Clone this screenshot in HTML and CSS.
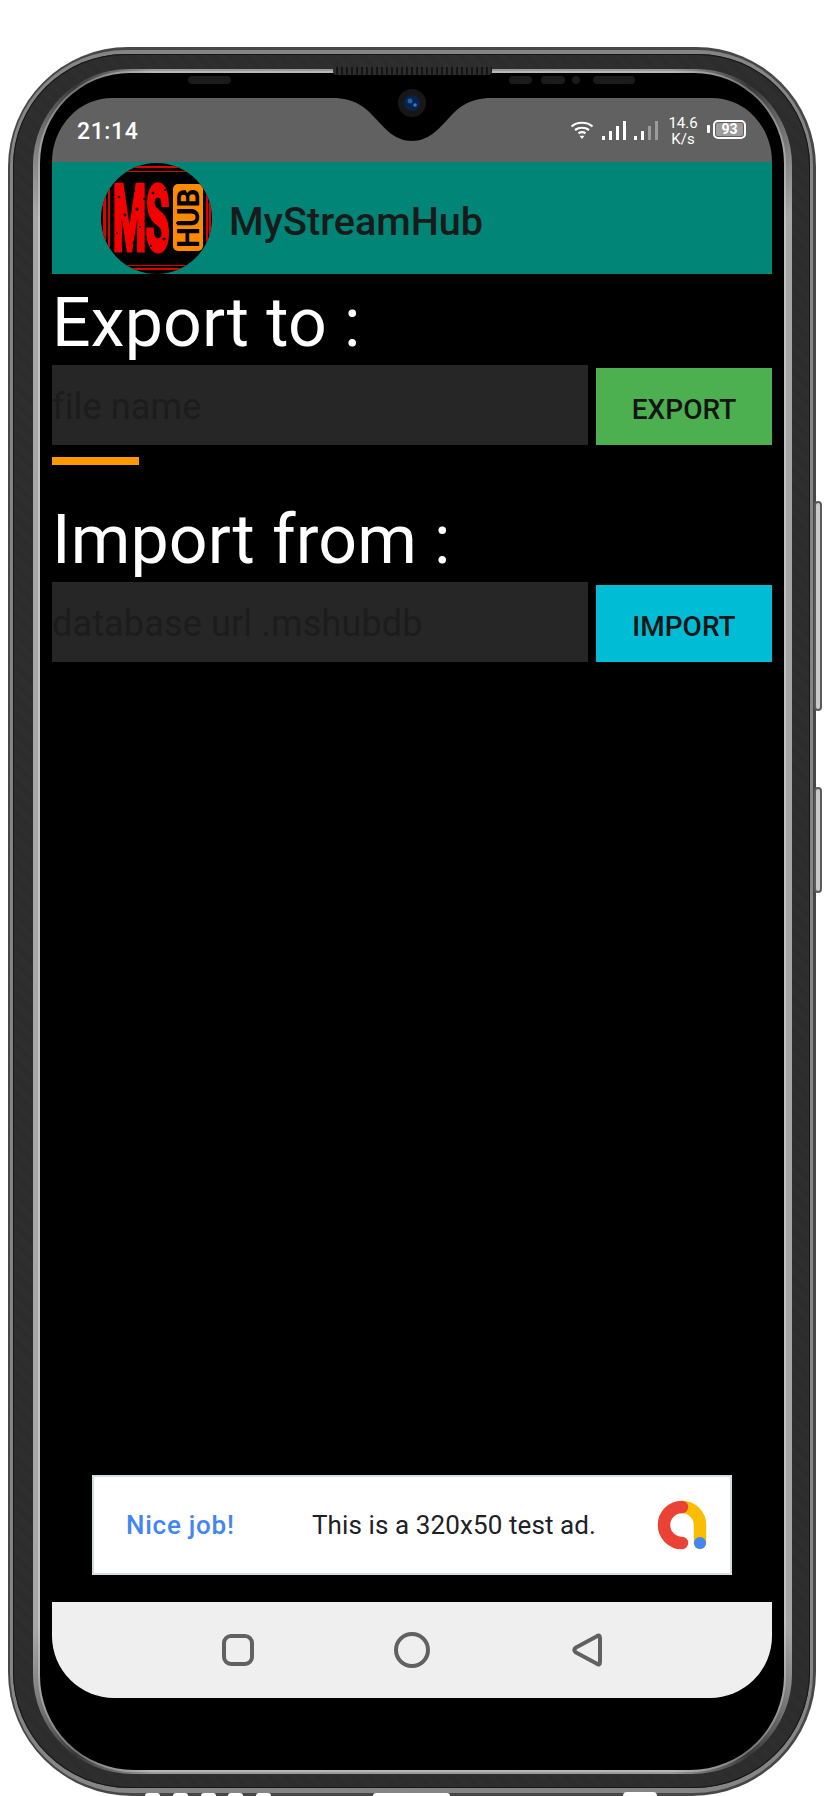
FILE: index.html
```html
<!DOCTYPE html>
<html lang="en">
<head>
    <meta charset="UTF-8">
    <meta name="viewport" content="width=device-width, initial-scale=1.0">
    <title>MyStreamHub - Export / Import</title>
    <link rel="stylesheet" href="styles.css">
</head>
<body>
    <div class="device">
        <div class="side-btn side-btn-power"></div>
        <div class="side-btn side-btn-volume"></div>
        <div class="hole hole-1"></div>
        <div class="hole hole-2"></div>
        <div class="hole hole-3"></div>
        <div class="hole hole-4"></div>
        <div class="hole hole-5"></div>
        <div class="usb-port"></div>
        <div class="jack"></div>

        <div class="rim-light">
            <div class="rim-dark">
                <div class="rim-inner">
                    <div class="bezel">
                        <div class="speaker"></div>
                        <div class="pill pill-left"></div>
                        <div class="pill pill-a"></div>
                        <div class="pill pill-b"></div>
                        <div class="pill pill-dot"></div>
                        <div class="pill pill-c"></div>

                        <div class="screen">
                            <div class="status-bar">
                                <span class="time">21:14</span>
                                <svg class="notch" viewBox="0 0 160 44">
                                    <path d="M0 0 C24 0 34 10 44 21 C54 32 64 43 80 43 C96 43 106 32 116 21 C126 10 136 0 160 0 Z" fill="#000"/>
                                </svg>
                                <div class="status-icons">
                                    <svg class="wifi" viewBox="0 0 24 20" fill="none" stroke="#fff" stroke-width="2.2">
                                        <path d="M1.5 6.5 C7 1.5 17 1.5 22.5 6.5"/>
                                        <path d="M5 10 C9 7 15 7 19 10"/>
                                        <path d="M8.5 13.2 C10.5 12 13.5 12 15.5 13.2"/>
                                        <path d="M9.5 15.8 H14.5 L12 19 Z" fill="#fff" stroke="none"/>
                                    </svg>
                                    <svg class="signal" viewBox="0 0 24 19">
                                        <rect x="0" y="15" width="3" height="4" fill="#fff"/>
                                        <rect x="7" y="10" width="3" height="9" fill="#fff"/>
                                        <rect x="14" y="5" width="3" height="14" fill="#fff"/>
                                        <rect x="21" y="0" width="3" height="19" fill="#fff"/>
                                    </svg>
                                    <svg class="signal" viewBox="0 0 24 19">
                                        <rect x="0" y="15" width="3" height="4" fill="#fff"/>
                                        <rect x="7" y="10" width="3" height="9" fill="#fff"/>
                                        <rect x="14" y="5" width="3" height="14" fill="#9b9b9b"/>
                                        <rect x="21" y="0" width="3" height="19" fill="#9b9b9b"/>
                                    </svg>
                                    <div class="net-speed">14.6<br>K/s</div>
                                    <div class="battery-nub"></div>
                                    <div class="battery"><span class="battery-level">93</span></div>
                                </div>
                            </div>

                            <div class="toolbar">
                                <svg class="app-logo" viewBox="0 0 111 111">
                                    <defs>
                                        <clipPath id="logoClip"><circle cx="55.5" cy="55.5" r="55.5"/></clipPath>
                                    </defs>
                                    <g clip-path="url(#logoClip)">
                                        <rect width="111" height="111" fill="#000"/>
                                        <rect y="3" width="111" height="2" fill="#e00000"/>
                                        <rect y="8" width="111" height="1" fill="#e00000"/>
                                        <rect y="102" width="111" height="1" fill="#e00000"/>
                                        <rect y="105" width="111" height="2" fill="#e00000"/>
                                        <rect x="2" y="30" width="3" height="50" fill="#e00000"/>
                                        <rect x="7" y="24" width="2" height="62" fill="#e00000"/>
                                        <rect x="105" y="24" width="2" height="62" fill="#e00000"/>
                                        <rect x="108" y="30" width="2" height="50" fill="#e00000"/>
                                        <text class="logo-ms" transform="translate(12 86.5) scale(.42 1)">MS</text>
                                        <rect x="72" y="21" width="30" height="67" rx="5" fill="#ff8a00"/>
                                        <text class="logo-hub" transform="translate(98 85) rotate(-90) scale(.96 1)">HUB</text>
                                        <g fill="#000">
                                            <circle cx="18" cy="34" r="1.2"/>
                                            <circle cx="24" cy="52" r="1.5"/>
                                            <circle cx="16" cy="70" r="1"/>
                                            <circle cx="33" cy="28" r="1.2"/>
                                            <circle cx="36" cy="46" r="1.6"/>
                                            <circle cx="39" cy="64" r="1.1"/>
                                            <circle cx="33" cy="80" r="1.4"/>
                                            <circle cx="43" cy="36" r="1"/>
                                            <circle cx="52" cy="30" r="1.3"/>
                                            <circle cx="60" cy="47" r="1.5"/>
                                            <circle cx="53" cy="62" r="1.2"/>
                                            <circle cx="63" cy="76" r="1.5"/>
                                            <circle cx="50" cy="83" r="1"/>
                                            <circle cx="64" cy="27" r="1"/>
                                            <circle cx="78" cy="34" r="1.2"/>
                                            <circle cx="84" cy="28" r="1"/>
                                            <circle cx="76" cy="60" r="1"/>
                                        </g>
                                    </g>
                                </svg>
                                <span class="app-title">MyStreamHub</span>
                            </div>

                            <div class="content">
                                <h1 class="section-title">Export to :</h1>
                                <div class="form-row">
                                    <input class="text-field" type="text" placeholder="file name">
                                    <button class="action-btn export-btn">EXPORT</button>
                                </div>
                                <div class="progress"></div>

                                <h1 class="section-title section-title-import">Import from :</h1>
                                <div class="form-row">
                                    <input class="text-field" type="text" placeholder="database url .mshubdb">
                                    <button class="action-btn import-btn">IMPORT</button>
                                </div>

                                <div class="ad-banner">
                                    <span class="ad-title">Nice job!</span>
                                    <span class="ad-text">This is a 320x50 test ad.</span>
                                    <svg class="ad-logo" viewBox="0 0 50 50" fill="none" stroke-width="12.5" stroke-linecap="round">
                                        <path d="M25 7 A18 18 0 0 1 43 25 V43" stroke="#fbbc04"/>
                                        <path d="M25 7 A18 18 0 0 0 25 43" stroke="#ea4335"/>
                                        <circle cx="43" cy="43" r="6" fill="#4285f4"/>
                                    </svg>
                                </div>
                            </div>

                            <div class="nav-bar">
                                <svg class="nav-square" viewBox="0 0 32 32">
                                    <rect x="2" y="2" width="28" height="28" rx="7" fill="none" stroke="#616161" stroke-width="4"/>
                                </svg>
                                <svg class="nav-circle" viewBox="0 0 36 36">
                                    <circle cx="18" cy="18" r="16" fill="none" stroke="#616161" stroke-width="4"/>
                                </svg>
                                <svg class="nav-back" viewBox="0 0 30 34">
                                    <path d="M28 5 Q28 1 24.5 3.5 L4 14.5 Q0.5 17 4 19.5 L24.5 30.5 Q28 33 28 29 Z" fill="none" stroke="#616161" stroke-width="4" stroke-linejoin="round"/>
                                </svg>
                            </div>
                        </div>

                        <svg class="camera" viewBox="0 0 28 28">
                            <circle cx="14" cy="14" r="14" fill="#171717"/>
                            <circle cx="14" cy="14" r="8" fill="#0a2348"/>
                            <circle cx="12" cy="12" r="2.5" fill="#1d5fb5"/>
                            <circle cx="17" cy="16" r="1.8" fill="#2f7ad6"/>
                        </svg>
                    </div>
                </div>
            </div>
        </div>
    </div>
</body>
</html>
```

FILE: styles.css
```css
* {
    box-sizing: border-box;
}
body {
    margin: 0;
    height: 1796px;
    overflow: hidden;
    background: #fff;
    font-family: Roboto, "Liberation Sans", sans-serif;
}

/* phone frame */
.device {
    position: relative;
    height: 1749px;
    margin: 47px 8px 0;
    padding: 3px 3px 3px 2px;
    border-radius: 120px 120px 124px 124px;
    background: #474747;
}
.rim-light {
    height: 100%;
    padding: 4px 3px 5px 3px;
    border-radius: 116px 116px 120px 120px;
    background: #858585;
}
.rim-dark {
    height: 100%;
    padding: 15px 18px 14px 20px;
    border-radius: 112px 112px 116px 116px;
    background: repeating-linear-gradient(45deg, #2b2b2b 0, #2b2b2b 1px, #303030 1px, #303030 2px);
    box-shadow: inset 0 0 0 1px #161616;
}
/* highlight fades out around the corners */
.rim-inner {
    height: 100%;
    padding: 4px 8px 4px 7px;
    border-radius: 96px 96px 100px 100px;
    background: conic-gradient(#9a9a9a 0 17deg, #383838 22deg, #a6a6a6 28deg 152deg, #383838 158deg, #9a9a9a 163deg 197deg, #383838 202deg, #a6a6a6 208deg 332deg, #383838 338deg, #9a9a9a 343deg);
}
.bezel {
    position: relative;
    height: 100%;
    padding: 25px 12px 72px;
    border-radius: 90px 90px 94px 94px;
    background: #000;
    box-shadow: 0 0 0 2px rgba(255, 255, 255, 0.3);
}
.side-btn {
    position: absolute;
    left: 806px;
    width: 8px;
    border: 2px solid #5a5a5a;
    border-radius: 4px;
    background: #c9c9c9;
}
.side-btn-power {
    top: 454px;
    height: 210px;
}
.side-btn-volume {
    top: 740px;
    height: 106px;
}
.hole, .usb-port, .jack {
    position: absolute;
    bottom: 0;
    height: 3px;
    border-radius: 4px 4px 0 0;
    background: #fff;
}
.hole {
    width: 15px;
}
.hole-1 { left: 137px; }
.hole-2 { left: 165px; }
.hole-3 { left: 193px; }
.hole-4 { left: 220px; }
.hole-5 { left: 248px; }
.usb-port {
    left: 365px;
    width: 77px;
}
.jack {
    left: 615px;
    width: 34px;
    height: 4px;
    border-radius: 17px 17px 0 0;
}
.speaker {
    position: absolute;
    top: -6px;
    left: 293px;
    width: 159px;
    height: 8px;
    border-radius: 0 0 4px 4px;
    background: repeating-linear-gradient(90deg, #2d2d2d 0, #2d2d2d 3px, #141414 3px, #141414 5px);
}
.pill {
    position: absolute;
    top: 3px;
    height: 8px;
    border-radius: 4px;
    background: #1a1a1a;
}
.pill-left { left: 148px; width: 43px; }
.pill-a { left: 469px; width: 23px; }
.pill-b { left: 501px; width: 24px; }
.pill-dot { left: 532px; width: 8px; }
.pill-c { left: 553px; width: 42px; }
.camera {
    position: absolute;
    top: 16px;
    left: 358px;
    width: 28px;
    height: 28px;
}

/* screen */
.screen {
    display: flex;
    flex-direction: column;
    height: 100%;
    overflow: hidden;
    border-radius: 60px 60px 62px 62px / 64px 64px 62px 62px;
    background: #000;
}
.status-bar {
    position: relative;
    display: flex;
    flex: none;
    height: 64px;
    padding-left: 25px;
    background: #606160;
    color: #fff;
}
.time {
    margin-top: 20px;
    font-size: 23px;
    font-weight: 500;
    line-height: 28px;
    letter-spacing: 0.6px;
}
.notch {
    position: absolute;
    top: 0;
    left: 280px;
    width: 160px;
    height: 44px;
}
.status-icons {
    display: flex;
    align-items: flex-start;
    margin-left: auto;
    padding-right: 26px;
}
.wifi {
    width: 24px;
    height: 20px;
    margin-top: 22px;
}
.signal {
    width: 24px;
    height: 19px;
    margin: 23px 0 0 8px;
}
.net-speed {
    width: 32px;
    margin: 18px 8px 0 9px;
    font-size: 15px;
    line-height: 15.5px;
    text-align: center;
}
.battery-nub {
    width: 3px;
    height: 8px;
    margin: 27px 3px 0 0;
    border-radius: 1px;
    background: #fff;
}
.battery {
    display: flex;
    width: 33px;
    height: 19px;
    margin-top: 22px;
    padding: 1px;
    border: 2px solid #fff;
    border-radius: 5px;
}
.battery-level {
    flex: 1;
    border-radius: 2px;
    background: #9c9c9c;
    font-size: 14px;
    font-weight: 700;
    line-height: 13px;
    text-align: center;
}
.toolbar {
    display: flex;
    flex: none;
    align-items: center;
    gap: 17px;
    height: 112px;
    padding-left: 49px;
    background: #008577;
}
.app-logo {
    width: 111px;
    height: 111px;
}
.logo-ms {
    fill: #f30000;
    stroke: #f30000;
    stroke-width: 5px;
    font-size: 90px;
    font-weight: 700;
}
.logo-hub {
    fill: #000;
    font-size: 31px;
    font-weight: 700;
}
.app-title {
    margin-top: 7px;
    color: #1a1a1a;
    font-size: 39.6px;
    font-weight: 500;
}
.content {
    display: flex;
    flex: 1;
    flex-direction: column;
}
.section-title {
    margin: 0;
    padding: 7px 0 0;
    color: #fff;
    font-size: 68px;
    font-weight: 400;
    line-height: 84px;
    letter-spacing: 0.15px;
}
.section-title-import {
    padding-top: 33px;
}
.form-row {
    display: flex;
    gap: 8px;
    height: 80px;
}
.text-field {
    width: 536px;
    height: 80px;
    padding: 4px 0 0;
    border: 0;
    border-radius: 0;
    background: #262626;
    font-family: inherit;
    font-size: 36px;
    letter-spacing: 0.15px;
}
.text-field::placeholder {
    color: #1c1c1c;
    opacity: 1;
}
.action-btn {
    width: 176px;
    height: 77px;
    margin-top: 3px;
    padding: 6px 0 0;
    border: 0;
    color: #141414;
    font-family: inherit;
    font-size: 28px;
    font-weight: 500;
}
.export-btn {
    background: #4caf50;
}
.import-btn {
    background: #00bcd4;
}
.progress {
    width: 87px;
    height: 8px;
    margin-top: 12px;
    background: #ff9800;
}
.ad-banner {
    display: flex;
    align-items: center;
    width: 640px;
    height: 100px;
    margin: auto auto 27px;
    padding: 0 23px 0 32px;
    border: 2px solid #d5dde0;
    background: #fff;
    font-size: 26px;
}
.ad-title {
    width: 186px;
    color: #4285f4;
    font-weight: 500;
    letter-spacing: 0.75px;
}
.ad-text {
    color: #202124;
    letter-spacing: 0.1px;
}
.ad-logo {
    width: 50px;
    height: 50px;
    margin-left: auto;
}
.nav-bar {
    display: flex;
    flex: none;
    align-items: center;
    justify-content: center;
    gap: 141px;
    height: 96px;
    background: #efefef;
}
.nav-square {
    width: 32px;
    height: 32px;
}
.nav-circle {
    width: 36px;
    height: 36px;
    margin: 0 1px 0 -1px;
}
.nav-back {
    width: 30px;
    height: 34px;
}
```
